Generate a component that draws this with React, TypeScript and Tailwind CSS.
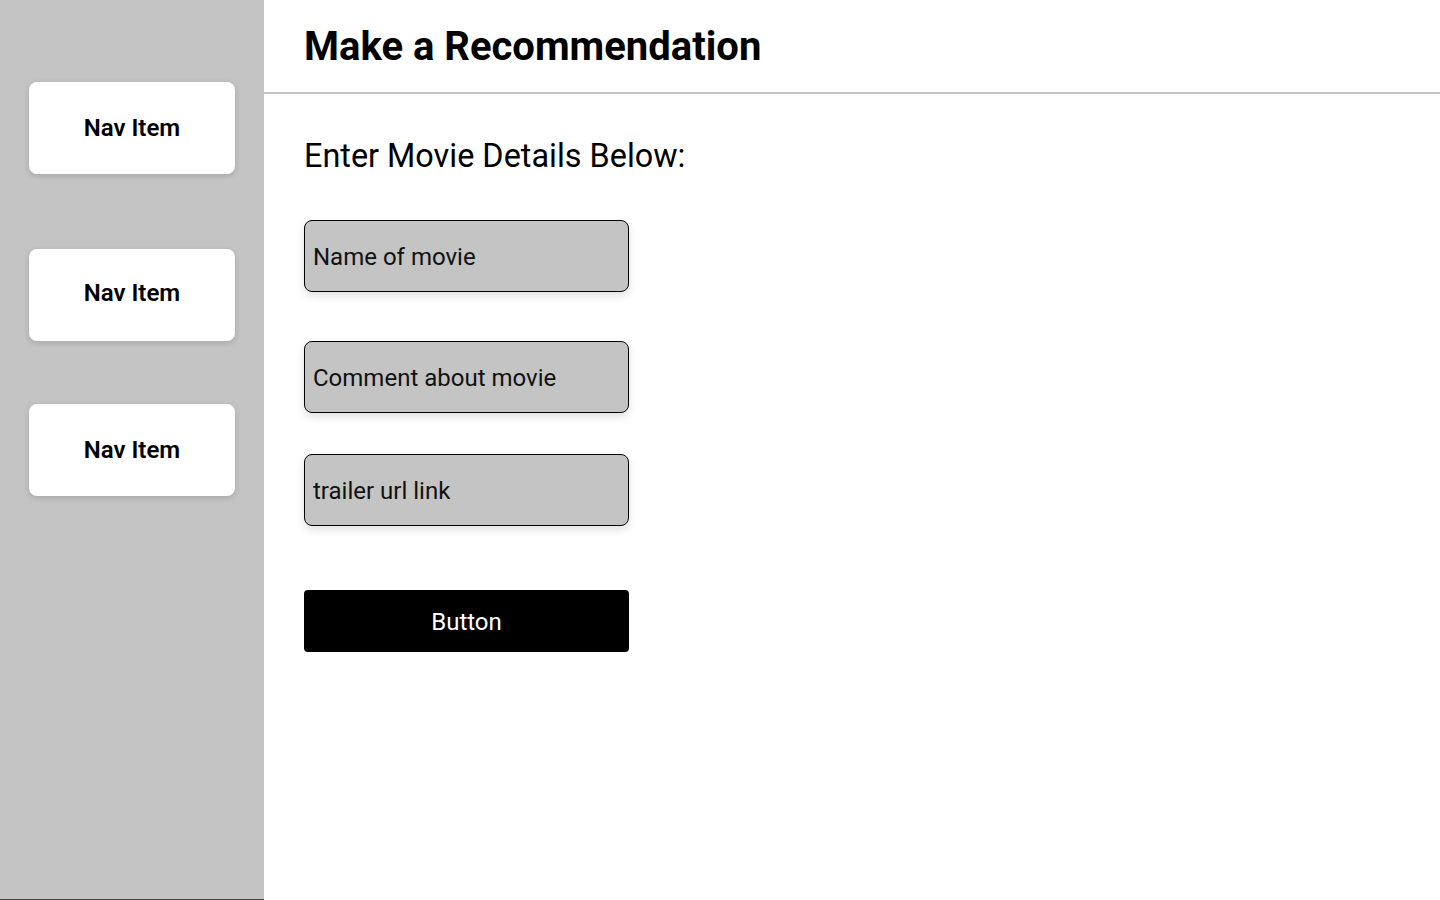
import React from "react";

const navItems = ["Nav Item", "Nav Item", "Nav Item"];

function NavCard({ label, className }: { label: string; className: string }) {
    return (
        <div className={`flex h-[92px] w-[206px] items-center justify-center rounded-lg bg-white shadow-[0_2px_6px_rgba(0,0,0,0.15)] ${className}`}>
            <span className="text-[24px] font-semibold text-black">{label}</span>
        </div>
    );
}

function Field({ placeholder, className }: { placeholder: string; className: string }) {
    return (
        <input
            placeholder={placeholder}
            className={`h-[72px] w-[325px] rounded-lg border border-black bg-[#c4c4c4] px-[8px] pt-[1px] text-[24px] text-black placeholder:text-[#111] shadow-[0_4px_8px_rgba(0,0,0,0.12)] outline-none ${className}`}
        />
    );
}

export default function App() {
    return (
        <div className="flex h-[900px] w-[1440px] bg-white font-['Roboto',sans-serif]">
            {/* Sidebar */}
            <aside className="flex h-full w-[264px] flex-col items-center border-b border-[#444] bg-[#c4c4c4] pt-[82px]">
                <NavCard label={navItems[0]} className="" />
                <NavCard label={navItems[1]} className="mt-[75px] pb-[5px]" />
                <NavCard label={navItems[2]} className="mt-[63px]" />
            </aside>

            <div className="flex flex-1 flex-col">
                <header className="flex h-[94px] items-start border-b-2 border-[#c4c4c4] pl-10 pt-[21px]">
                    <h1 className="text-[40px] font-bold leading-[52px] text-black">Make a Recommendation</h1>
                </header>

                <main className="flex flex-col pl-10 pt-[42px]">
                    <h2 className="text-[32.4px] leading-[40px] text-black">Enter Movie Details Below:</h2>
                    <Field placeholder="Name of movie" className="mt-[44px]" />
                    <Field placeholder="Comment about movie" className="mt-[49px]" />
                    <Field placeholder="trailer url link" className="mt-[41px]" />
                    <button className="mt-[64px] h-[62px] w-[325px] rounded bg-black pt-[2px] text-[24px] text-white">
                        Button
                    </button>
                </main>
            </div>
        </div>
    );
}
